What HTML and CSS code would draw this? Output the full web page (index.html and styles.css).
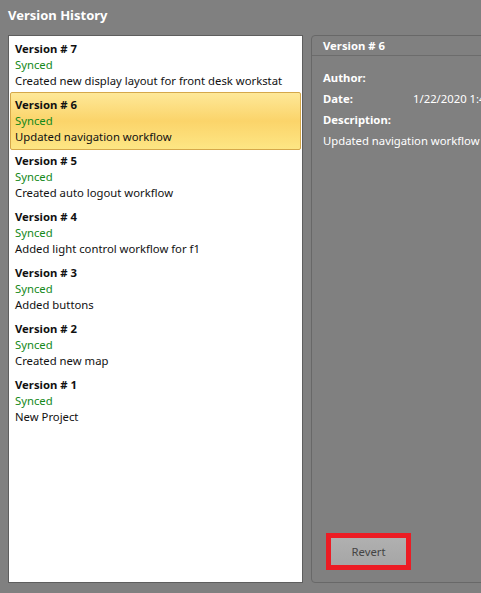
FILE: index.html
```html
<!DOCTYPE html>
<html>
<head>
<meta charset="utf-8">
<link rel="stylesheet" href="styles.css">
</head>
<body>
<div class="app">
  <div class="title">Version History</div>
  <div class="main">
    <div class="list">
      <div class="item"><div class="ver">Version # 7</div><div class="sync">Synced</div><div class="desc">Created new display layout for front desk workstat</div></div>
      <div class="item selected"><div class="ver">Version # 6</div><div class="sync">Synced</div><div class="desc">Updated navigation workflow</div></div>
      <div class="item"><div class="ver">Version # 5</div><div class="sync">Synced</div><div class="desc">Created auto logout workflow</div></div>
      <div class="item"><div class="ver">Version # 4</div><div class="sync">Synced</div><div class="desc">Added light control workflow for f1</div></div>
      <div class="item"><div class="ver">Version # 3</div><div class="sync">Synced</div><div class="desc">Added buttons</div></div>
      <div class="item"><div class="ver">Version # 2</div><div class="sync">Synced</div><div class="desc">Created new map</div></div>
      <div class="item"><div class="ver">Version # 1</div><div class="sync">Synced</div><div class="desc">New Project</div></div>
    </div>
    <div class="panel">
      <div class="panel-head">Version # 6</div>
      <div class="panel-body">
        <div class="row"><span class="label">Author:</span></div>
        <div class="row"><span class="label">Date:</span><span class="value">1/22/2020 1:44 PM</span></div>
        <div class="row"><span class="label">Description:</span></div>
        <div class="row plain">Updated navigation workflow</div>
        <div class="spacer"></div>
        <div class="btn-wrap"><button class="btn">Revert</button></div>
      </div>
    </div>
  </div>
</div>
</body>
</html>
```
FILE: styles.css
```css
html, body {
  margin: 0;
  padding: 0;
  background: #808080;
  overflow: hidden;
}
.app {
  width: 481px;
  height: 593px;
  font-family: "Noto Sans", "Open Sans", sans-serif;
  font-size: 11.3px;
  overflow: hidden;
}
.title {
  height: 35px;
  padding-left: 8px;
  color: #ffffff;
  font-weight: bold;
  font-size: 13px;
  line-height: 31px;
}
.main {
  display: flex;
  gap: 8px;
  padding-left: 8px;
  height: 548px;
}
.list {
  flex: none;
  width: 291px;
  background: #ffffff;
  border: 1px solid #5e5e5e;
  padding: 0 1px;
  box-sizing: content-box;
  height: 546px;
}
.item {
  padding: 4px 4px;
  line-height: 16px;
  height: 48px;
  border: 1px solid transparent;
  margin: 0;
  white-space: nowrap;
  overflow: hidden;
  color: #111;
}
.item + .item { margin-top: -2px; }
.item:first-child { margin-top: 0; }
.item.selected {
  background: linear-gradient(#fee898, #fbd46a 50%, #fde684);
  border-color: #d5a84a;
  border-radius: 2px;
}
.ver { font-weight: bold; }
.sync { color: #14891a; }
.panel {
  flex: none;
  width: 240px;
  border: 1px solid #686868;
  border-radius: 4px;
  background: #808080;
  color: #ffffff;
  display: flex;
  flex-direction: column;
  height: 546px;
}
.panel-head {
  height: 19px;
  padding: 0 11px;
  font-weight: bold;
  line-height: 19px;
  border-bottom: 1px solid #6c6c6c;
}
.panel-body {
  flex: 1;
  display: flex;
  flex-direction: column;
  padding: 11px 11px 12px 11px;
}
.row {
  height: 21px;
  line-height: 21px;
  white-space: nowrap;
  display: flex;
}
.label {
  font-weight: bold;
  width: 90px;
}
.plain { font-weight: normal; }
.spacer { flex: 1; }
.btn-wrap {
  margin-left: 3px;
  width: 75px;
  border: 5px solid #ec1c24;
}
.btn {
  display: block;
  width: 75px;
  height: 27px;
  border: 0;
  background: linear-gradient(#b0b0b0, #a6a6a6);
  color: #444;
  font-family: "Noto Sans", "Open Sans", sans-serif;
  font-size: 11.3px;
  padding: 0;
}
```
